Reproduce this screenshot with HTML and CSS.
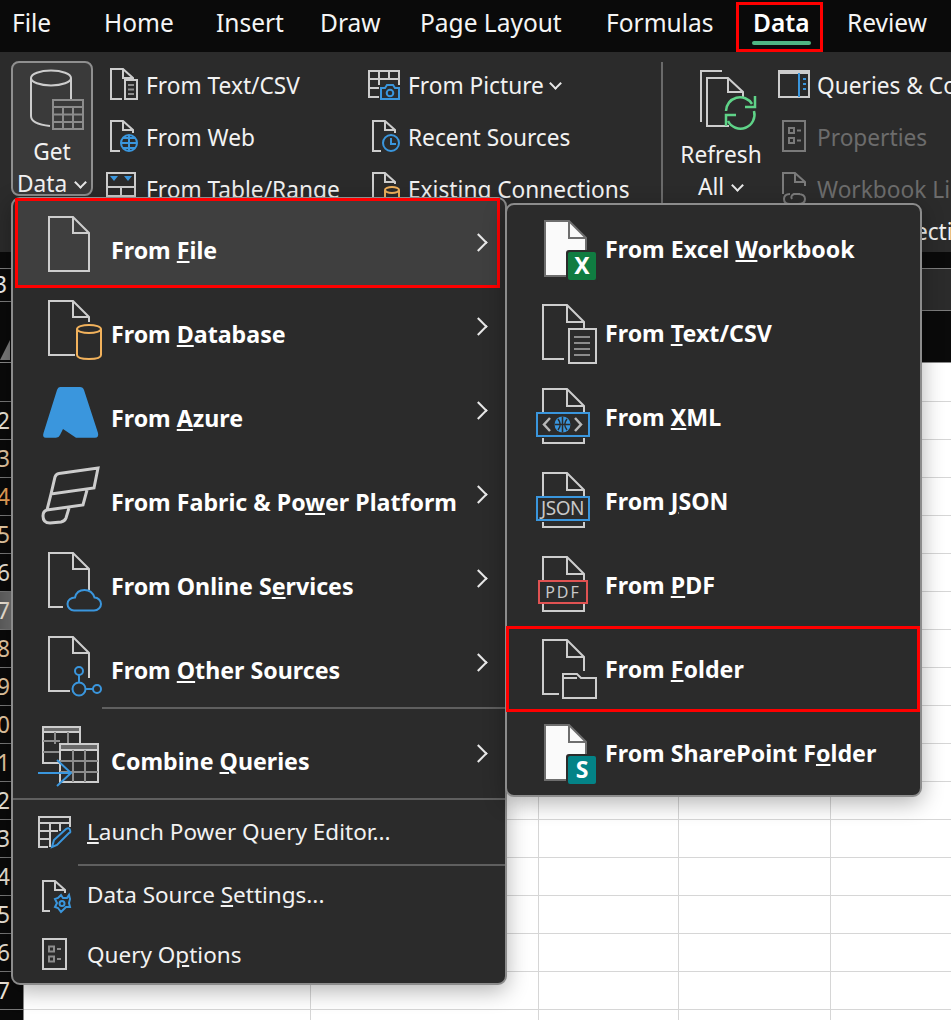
FILE: index.html
```html
<!DOCTYPE html>
<html>

<head>
    <meta charset="utf-8">
    <title>Excel Get Data menu</title>
    <link rel="stylesheet" href="styles.css">
</head>

<body>
    <div class="tabs">
        <span class="tab">File</span>
        <span class="tab">Home</span>
        <span class="tab">Insert</span>
        <span class="tab">Draw</span>
        <span class="tab">Page Layout</span>
        <span class="tab">Formulas</span>
        <span class="tab tab-active">Data</span>
        <span class="tab">Review</span>
    </div>

    <div class="ribbon">
        <div class="get-data">
            <svg class="ic" width="66" height="64" viewBox="0 0 66 64">
                <path d="M52 33V10M12 10V48Q12 56 31 58" />
                <ellipse cx="32" cy="10" rx="20" ry="7.5" />
                <path class="mid" d="M34 32H64V61H34ZM34 39H64M34 46.500H64M34 54H64M44 39V61M54 39V61" />
            </svg>
            <span class="big-line">Get</span>
            <span class="big-line">Data <i class="chev"></i></span>
        </div>

        <div class="cmd-col col-import">
            <div class="cmd">
                <svg class="ic" width="36" height="36" viewBox="0 0 36 36">
                    <path d="M16 31H5V1H17L27 10V11M17 1V10H27" />
                    <path d="M19 12H31V31H19Z" />
                    <path class="mid" d="M22 17H28M22 21.500H28M22 26H28" />
                </svg>
                <span>From Text/CSV</span>
            </div>
            <div class="cmd">
                <svg class="ic" width="36" height="36" viewBox="0 0 36 36">
                    <path d="M14 31H5V1H17L27 10V13M17 1V10H27" />
                    <g class="blue">
                        <circle cx="23" cy="23" r="8" />
                        <path d="M15 23H31M23 15V31M17 18H29M17 28H29" />
                    </g>
                </svg>
                <span>From Web</span>
            </div>
            <div class="cmd">
                <svg class="ic" width="36" height="36" viewBox="0 0 36 36">
                    <path d="M1 1H29V36H1ZM1 15H29M1 24H29M15 15V36" />
                    <path class="blue-fill" d="M4 4H12L8 9ZM18 4H26L22 9Z" />
                </svg>
                <span>From Table/Range</span>
            </div>
        </div>

        <div class="cmd-col col-sources">
            <div class="cmd">
                <svg class="ic" width="36" height="36" viewBox="0 0 36 36">
                    <path d="M11 29H1V3H31V17M1 11H31M1 20H11M11 3V17M21 3V11" />
                    <g class="blue">
                        <path d="M13 31V20H17L19 17H25L27 20H31V31Z" />
                        <circle cx="22" cy="25" r="3.300" />
                    </g>
                </svg>
                <span>From Picture</span>
                <i class="chev"></i>
            </div>
            <div class="cmd">
                <svg class="ic" width="36" height="36" viewBox="0 0 36 36">
                    <path d="M13 31H5V1H17L27 10V13M17 1V10H27" />
                    <g class="blue">
                        <circle cx="23" cy="23" r="8" />
                        <path d="M23 18V24H28" />
                    </g>
                </svg>
                <span>Recent Sources</span>
            </div>
            <div class="cmd">
                <svg class="ic" width="36" height="36" viewBox="0 0 36 36">
                    <path d="M13 31H5V1H17L27 10V12M17 1V10H27" />
                    <g class="orange">
                        <ellipse cx="24" cy="18" rx="7" ry="3" />
                        <path d="M17 18V34H31V18" />
                    </g>
                </svg>
                <span>Existing Connections</span>
            </div>
        </div>

        <div class="ribbon-sep"></div>

        <div class="group-queries">
            <div class="group-row">
                <div class="refresh">
                    <svg class="ic" width="70" height="66" viewBox="-10 0 70 66">
                        <path d="M26 5H5V56" />
                        <path d="M33 60H11V12H32L47 26V31M32 12V26H47" />
                        <g class="green">
                            <path d="M58 45A14 14 0 0 1 32 55M30 45A14 14 0 0 1 56 38" />
                            <path d="M59 30V41H49M30 60V49H40" />
                        </g>
                    </svg>
                    <span class="big-line">Refresh</span>
                    <span class="big-line">All <i class="chev"></i></span>
                </div>
                <div class="cmd-col col-queries">
                    <div class="cmd">
                        <svg class="ic" width="36" height="36" viewBox="0 0 36 36">
                            <path d="M3 3H33V29H3ZM3 5H33" />
                            <path class="blue" d="M23 5V29M27 11H30M27 16H30M27 21H30" />
                        </svg>
                        <span>Queries &amp; Connections</span>
                    </div>
                    <div class="cmd cmd-off">
                        <svg class="ic" width="36" height="36" viewBox="0 0 36 36">
                            <path d="M7 1H29V31H7ZM13 8H18V13H13ZM13 18H18V23H13ZM21 10.500H25M21 20.500H25" />
                        </svg>
                        <span>Properties</span>
                    </div>
                    <div class="cmd cmd-off">
                        <svg class="ic" width="36" height="36" viewBox="0 0 36 36">
                            <path d="M7 22V1H19L29 10V14M19 1V10H29" />
                            <path d="M14 22Q8 22 8 27T14 32H22M24 22H18Q14 24 16 27M22 22Q29 22 29 27T22 32" />
                        </svg>
                        <span>Workbook Links</span>
                    </div>
                </div>
            </div>
            <div class="group-label">Queries &amp; Connections</div>
        </div>
    </div>

    <div class="gap-bar"></div>

    <div class="formula-bar">
        <div class="name-wrap">
            <div class="name-box">3</div>
        </div>
        <div class="formula-input"></div>
    </div>

    <div class="col-head">
        <i class="corner"></i>
    </div>

    <div class="sheet">
        <div class="row-head">
            <div></div>
            <div>2</div>
            <div class="row-sel">3</div>
            <div class="row-hot">4</div>
            <div class="row-sel">5</div>
            <div>6</div>
            <div class="row-cur">7</div>
            <div class="row-sel">8</div>
            <div class="row-sel">9</div>
            <div class="row-sel">0</div>
            <div class="row-sel">1</div>
            <div>2</div>
            <div>3</div>
            <div>4</div>
            <div>5</div>
            <div>6</div>
            <div>7</div>
        </div>
        <div class="cells">
            <div class="cell-col w1"></div>
            <div class="cell-col w2"></div>
            <div class="cell-col w3"></div>
            <div class="cell-col w4"></div>
        </div>
    </div>

    <!-- main dropdown -->
    <div class="menu menu-main">
        <div class="item item-on">
            <svg class="ic" width="66" height="64" viewBox="0 0 66 64">
                <path d="M11 6H35L51 22V60H11ZM35 6V22H51" />
            </svg>
            <span class="label"><b>From <u>F</u>ile</b></span>
            <i class="arrow"></i>
        </div>
        <div class="item">
            <svg class="ic" width="66" height="64" viewBox="0 0 66 64">
                <path d="M37 60H11V6H35L51 22V27M35 6V22H51" />
                <g class="orange">
                    <ellipse cx="51" cy="34" rx="12" ry="4" />
                    <path d="M39 34V60Q39 64 51 64T63 60V34" />
                </g>
            </svg>
            <span class="label"><b>From <u>D</u>atabase</b></span>
            <i class="arrow"></i>
        </div>
        <div class="item">
            <svg class="ic" width="66" height="64" viewBox="0 0 66 64">
                <path class="azure" d="M22 8H42Q45 8 46 11L60 54Q61 58.700 57 58.700H38L25 50L22 56Q21 58.700 18 58.700H8Q4 58.700 5.500 54L19 11Q20 8 22 8Z" />
            </svg>
            <span class="label"><b>From <u>A</u>zure</b></span>
            <i class="arrow"></i>
        </div>
        <div class="item">
            <svg class="ic ic-fabric" width="66" height="64" viewBox="0 0 66 64">
                <path d="M13 31L17 14Q18 11 21 10.500L60 5L56 25L13 31ZM13 31L9 47L45 42L49 27M9 47Q5 48 5 53Q5 60 12 60L23 59Q27 58 28 55L31 45" />
            </svg>
            <span class="label"><b>From Fabric &amp; Po<u>w</u>er Platform</b></span>
            <i class="arrow"></i>
        </div>
        <div class="item">
            <svg class="ic" width="66" height="64" viewBox="0 0 66 64">
                <path d="M25 60H11V6H35L51 22V43M35 6V22H51" />
                <path class="blue" d="M36 63.500H56C60 63.500 63 60.500 63 57C63 53.500 60 50.500 56.500 50.500C55 46 51 43 46.500 43C41.500 43 38 46 37 50.500C33 50.500 29.500 53 29.500 57C29.500 60.500 32.500 63.500 36 63.500Z" />
            </svg>
            <span class="label"><b>From Online S<u>e</u>rvices</b></span>
            <i class="arrow"></i>
        </div>
        <div class="item">
            <svg class="ic" width="66" height="64" viewBox="0 0 66 64">
                <path d="M32 60H11V6H35L51 22V47M35 6V22H51" />
                <g class="blue">
                    <circle cx="41" cy="40" r="4" />
                    <circle cx="41" cy="58" r="6.500" />
                    <circle cx="59" cy="58" r="4" />
                    <path d="M41 44V51.500M47.500 58H55" />
                </g>
            </svg>
            <span class="label"><b>From <u>O</u>ther Sources</b></span>
            <i class="arrow"></i>
        </div>
        <div class="menu-sep sep-wide"></div>
        <div class="item">
            <svg class="ic" width="66" height="64" viewBox="0 0 66 64">
                <path d="M5 5H42V22M22 41H5V5" />
                <path class="band" d="M5 5H42V10H5Z" />
                <path class="mid" d="M5 19H22M5 30H22M17 10V22M30 10V22" />
                <path d="M22 22H60V60H22Z" />
                <path class="band" d="M22 22H60V28H22Z" />
                <path class="mid" d="M22 39H60M22 50H60M35 28V60M47 28V60" />
                <path class="blue" d="M0 51H33M19 38L33 51L19 64" />
            </svg>
            <span class="label"><b>Combine <u>Q</u>ueries</b></span>
            <i class="arrow"></i>
        </div>
        <div class="menu-sep"></div>
        <div class="item item-small">
            <svg class="ic" width="40" height="40" viewBox="0 -1 40 40">
                <path d="M12 34H3V4H34V14M3 10H34M3 18H22M3 26H13M14 10V34M24 10V18" />
                <path class="blue" d="M16 34L18 27L30 16Q33 14 34 17T33 20L21 32Z" />
            </svg>
            <span class="plain plain-low"><u>L</u>aunch Power Query Editor...</span>
        </div>
        <div class="menu-sep sep-indent"></div>
        <div class="item item-small">
            <svg class="ic" width="40" height="40" viewBox="0 0 40 40">
                <path d="M14 35H7V5H19L29 14V17M19 5V14H29" />
                <g class="blue">
                    <path d="M25 19L27 22H31L33 19L34 23L33 27L34 31L30 31L25 36L22 32L19 31L21 27L19 23L22 22Z" />
                    <circle cx="26" cy="27.500" r="2.500" />
                </g>
            </svg>
            <span class="plain">Data Source <u>S</u>ettings...</span>
        </div>
        <div class="item item-small">
            <svg class="ic" width="40" height="40" viewBox="0 0 40 40">
                <path d="M7 3H30V33H7Z" />
                <path class="mid" d="M13 10.500H18V15.500H13ZM13 20.500H18V25.500H13ZM21 13H25M21 23H25" />
            </svg>
            <span class="plain">Query O<u>p</u>tions</span>
        </div>
    </div>

    <!-- From File flyout -->
    <div class="menu menu-sub">
        <div class="item">
            <svg class="ic" width="66" height="64" viewBox="0 0 66 64">
                <path class="sheet-doc" d="M11 3H35L52 20V58H11Z" />
                <path class="fold" d="M35 3V20H52" />
                <rect class="badge-gap" x="32" y="32" width="32" height="32" rx="3" />
                <rect class="badge-xl" x="34" y="34" width="28" height="28" rx="2" />
                <text class="badge-text" x="48" y="56">X</text>
            </svg>
            <span class="sub-label"><b>From Excel <u>W</u>orkbook</b></span>
        </div>
        <div class="item">
            <svg class="ic" width="66" height="64" viewBox="0 0 66 64">
                <path d="M30 57H9V3H33L50 20V26M33 3V20H50" />
                <path d="M35 27H62V61H35Z" />
                <path class="mid" d="M40 35H56M40 41H56M40 47H56M40 53H56" />
            </svg>
            <span class="sub-label"><b>From <u>T</u>ext/CSV</b></span>
        </div>
        <div class="item">
            <svg class="ic" width="66" height="64" viewBox="0 0 66 64">
                <path d="M9 26V3H33L50 20V26M33 3V20H50M9 52V57H50V52" />
                <rect class="blue" x="3" y="27" width="52" height="23" />
                <path class="mid-bright" d="M16 32L10 38.500L16 45M41 32L47 38.500L41 45" />
                <circle class="blue-fill" cx="28.500" cy="38.500" r="8" />
                <path class="globe-lines" d="M20.500 38.500H36.500M28.500 30.500V46.500M24 33Q28.500 38.500 24 44M33 33Q28.500 38.500 33 44" />
            </svg>
            <span class="sub-label"><b>From <u>X</u>ML</b></span>
        </div>
        <div class="item">
            <svg class="ic" width="66" height="64" viewBox="0 0 66 64">
                <path d="M9 26V3H33L50 20V26M33 3V20H50M9 52V57H50V52" />
                <rect class="blue" x="3" y="27" width="52" height="23" />
                <text class="box-text" x="28.500" y="45">JSON</text>
            </svg>
            <span class="sub-label"><b>From <u>J</u>SON</b></span>
        </div>
        <div class="item">
            <svg class="ic" width="66" height="64" viewBox="0 0 66 64">
                <path d="M9 27V3H33L50 20V27M33 3V20H50M9 50V57H50V50" />
                <rect class="red" x="5" y="27" width="48" height="22" />
                <text class="box-text pdf-text" x="29" y="44">PDF</text>
            </svg>
            <span class="sub-label"><b>From <u>P</u>DF</b></span>
        </div>
        <div class="item item-folder">
            <svg class="ic" width="66" height="64" viewBox="0 0 66 64">
                <path d="M25 57H9V3H33L50 20V34M33 3V20H50" />
                <path d="M29 61V37H43L47 41H62V61ZM29 41H43" />
            </svg>
            <span><b>From <u>F</u>older</b></span>
        </div>
        <div class="item">
            <svg class="ic" width="66" height="64" viewBox="0 0 66 64">
                <path class="sheet-doc" d="M11 3H35L52 20V58H11Z" />
                <path class="fold" d="M35 3V20H52" />
                <rect class="badge-gap" x="32" y="32" width="32" height="32" rx="3" />
                <rect class="badge-sp" x="34" y="34" width="28" height="28" rx="2" />
                <text class="badge-text" x="48" y="56">S</text>
            </svg>
            <span class="sub-label"><b>From SharePoint F<u>o</u>lder</b></span>
        </div>
    </div>
</body>

</html>
```

FILE: styles.css
```css
* {
    margin: 0;
    padding: 0;
    box-sizing: border-box;
}

html,
body {
    width: 951px;
    height: 1020px;
    overflow: hidden;
}

body {
    position: relative;
    background-color: #fff;
    color: #f2f2f2;
    font-family: "Noto Sans", "Open Sans", sans-serif;
    font-size: 22.700px;
}

/* icons */
.ic {
    flex: none;
    overflow: visible;
    fill: none;
    stroke: #cdcdcd;
    stroke-width: 2;
}

.mid {
    stroke: #8c8c8c;
}

.mid-bright {
    stroke: #b8b8b8;
    stroke-width: 2.500;
}

.band {
    fill: #6a6a6a;
    stroke: #cdcdcd;
}

.blue {
    stroke: #3a96dd;
}

.blue-fill {
    fill: #3a96dd;
    stroke: none;
}

.globe-lines {
    stroke: #2b2b2b;
    stroke-width: 1.500;
}

.orange {
    stroke: #f2b25c;
}

.green {
    stroke: #5fd388;
    stroke-width: 2.500;
}

.red {
    stroke: #e05252;
}

.azure {
    fill: #3a96dd;
    stroke: none;
}

.ic-fabric {
    stroke-width: 3;
}

.sheet-doc {
    fill: #fafafa;
    stroke: #6e6e6e;
}

.fold {
    stroke: #6e6e6e;
}

.badge-gap {
    fill: #2b2b2b;
    stroke: none;
}

.badge-xl {
    fill: #107c41;
    stroke: none;
}

.badge-sp {
    fill: #038387;
    stroke: none;
}

.badge-text {
    fill: #fff;
    stroke: none;
    font-family: "Noto Sans", sans-serif;
    font-size: 23px;
    font-weight: 700;
    text-anchor: middle;
}

.box-text {
    fill: #c8c8c8;
    stroke: none;
    font-family: "Noto Sans", sans-serif;
    font-size: 19px;
    letter-spacing: -0.5px;
    text-anchor: middle;
}

.pdf-text {
    font-size: 16px;
    letter-spacing: 2px;
}

/* tabs */
.tabs {
    display: grid;
    grid-template-columns: 92px 112px 104px 100px 186px 147px 94px auto;
    height: 52px;
    padding-left: 12px;
    background-color: #0a0a0a;
    font-size: 24.500px;
    line-height: 46px;
    color: #f5f5f5;
    white-space: nowrap;
}

.tab {
    justify-self: start;
}

.tab-active {
    position: relative;
    font-weight: 600;
    color: #fff;
}

.tab-active::before {
    content: "";
    box-sizing: border-box;
    position: absolute;
    left: -17px;
    right: -13px;
    top: 2px;
    height: 50px;
    border: 3px solid #f00;
}

.tab-active::after {
    content: "";
    position: absolute;
    left: -1px;
    right: -1px;
    top: 41px;
    height: 4px;
    border-radius: 2px;
    background-color: #4fb583;
}

/* ribbon */
.ribbon {
    display: flex;
    height: 200px;
    padding-left: 11px;
    background-color: #2b2b2b;
    overflow: hidden;
    line-height: 32px;
}

.get-data {
    flex: none;
    display: flex;
    flex-direction: column;
    align-items: center;
    width: 82px;
    height: 135px;
    margin-top: 9px;
    padding-top: 5px;
    border: 2px solid #8f8f8f;
    border-radius: 8px;
    background-color: #3a3a3a;
}

.big-line {
    display: block;
    text-align: center;
    white-space: nowrap;
}

.get-data .ic + .big-line {
    margin-top: 4px;
}

.refresh .ic + .big-line {
    margin-top: 7px;
}

.chev {
    display: inline-block;
    width: 9px;
    height: 9px;
    margin: 0 2px 5px 3px;
    border-right: 2px solid #e8e8e8;
    border-bottom: 2px solid #e8e8e8;
    transform: rotate(45deg);
}

.cmd-col {
    flex: none;
    display: flex;
    flex-direction: column;
    padding-top: 8px;
}

.col-import {
    width: 262px;
    margin-left: 13px;
}

.col-sources {
    width: 293px;
}

.col-import .cmd,
.col-sources .cmd {
    gap: 4px;
}

.cmd {
    display: flex;
    align-items: center;
    gap: 5px;
    height: 52px;
    white-space: nowrap;
}

.cmd span {
    margin-top: -1px;
}

.cmd-off {
    color: #6c6c6c;
}

.cmd-off .ic {
    stroke: #7a7a7a;
}

.ribbon-sep {
    flex: none;
    width: 2px;
    height: 142px;
    margin-top: 10px;
    background-color: #6a6a6a;
}

.group-queries {
    flex: none;
    margin-left: 3px;
}

.group-row {
    display: flex;
}

.refresh {
    flex: none;
    display: flex;
    flex-direction: column;
    align-items: center;
    width: 110px;
    padding-top: 14px;
}

.group-label {
    margin-left: 81px;
    white-space: nowrap;
}

/* bars under the ribbon */
.gap-bar {
    height: 16px;
    background-color: #0a0a0a;
}

.formula-bar {
    display: flex;
    height: 43px;
    background-color: #2b2b2b;
    border-top: 1px solid #7c7c7c;
}

.name-wrap {
    width: 100px;
    background-color: #0a0a0a;
}

.name-box {
    height: 33px;
    border-bottom: 1px solid #7c7c7c;
    line-height: 32px;
    text-indent: -6px;
}

.formula-input {
    flex: 1;
    border-bottom: 1px solid #7c7c7c;
}

.col-head {
    position: relative;
    height: 52px;
    background-color: #0a0a0a;
    border-bottom: 1px solid #8a8a8a;
}

.corner {
    position: absolute;
    left: 0;
    top: 29px;
    width: 10px;
    height: 20px;
    background-color: #7a7a7a;
    clip-path: polygon(100% 0, 100% 100%, 0 100%);
}

/* sheet */
.sheet {
    display: flex;
    height: 657px;
}

.row-head {
    flex: none;
    width: 24px;
    padding-top: 1px;
    background-color: #0a0a0a;
    border-right: 1px solid #888;
}

.row-head div {
    height: 38px;
    border-bottom: 1px solid #777;
    line-height: 37px;
    text-indent: -3px;
    color: #f0e8dc;
}

.row-head .row-sel {
    color: #e8cba4;
}

.row-head .row-hot {
    color: #eda45a;
}

.row-head .row-cur {
    background: linear-gradient(to right, #5c5c5c, #8a8a8a);
    color: #f0e6d8;
}

.cells {
    flex: 1;
    display: flex;
    background-image: repeating-linear-gradient(to bottom, #fff 0, #fff 37px, #d6d6d6 37px, #d6d6d6 38px);
    background-position: 0 1px;
}

.cell-col {
    flex: none;
    border-right: 1px solid #d6d6d6;
}

.w1 {
    width: 287px;
}

.w2 {
    width: 228px;
}

.w3 {
    width: 140px;
}

.w4 {
    width: 152px;
}

/* dropdown menus */
.menu {
    position: absolute;
    display: flex;
    flex-direction: column;
    border: 2px solid #8c8c8c;
    border-radius: 9px;
    background-color: #2b2b2b;
    box-shadow: 0 6px 22px rgba(0, 0, 0, 0.3);
    color: #fff;
}

.menu-main {
    left: 11px;
    top: 197px;
    width: 496px;
    height: 788px;
    padding-top: 2px;
}

.menu-sub {
    left: 505px;
    top: 203px;
    width: 417px;
    height: 594px;
    padding-top: 3px;
    font-size: 23.200px;
}

.item {
    position: relative;
    display: flex;
    align-items: center;
    flex: none;
    height: 84px;
}

.menu-main .item {
    padding-left: 20px;
    margin-right: 8px;
    margin-left: 5px;
    gap: 7px;
    font-size: 23.200px;
}

.menu-main .item-on {
    background-color: #3f3f3f;
    outline: 3px solid #f00;
}

.menu-main .item-small {
    height: 60px;
    padding-left: 18px;
    gap: 11px;
    font-size: 22.500px;
}

.menu-sub .item {
    padding-left: 27px;
    gap: 5px;
}

.menu-sub .item-folder {
    height: 86px;
    margin-top: -2px;
    margin-left: -1px;
    padding-left: 28px;
    box-shadow: inset 0 0 0 3px #f00;
}

.sub-label {
    margin-top: -2px;
}

.label {
    padding-top: 14px;
}

.arrow {
    position: absolute;
    right: 12px;
    top: 35px;
    width: 13px;
    height: 13px;
    border-top: 2px solid #e8e8e8;
    border-right: 2px solid #e8e8e8;
    transform: rotate(45deg);
}

.plain {
    margin-top: -4px;
    font-weight: 400;
    color: #f2f2f2;
}

.plain-low {
    padding-top: 2px;
}

.menu-sep {
    flex: none;
    height: 2px;
    margin-top: 2px;
    margin-bottom: 2px;
    background-color: #5f5f5f;
}

.sep-wide {
    margin-left: 89px;
    margin-bottom: 3px;
}

.sep-indent {
    margin-left: 65px;
    margin-bottom: 0;
}
```
